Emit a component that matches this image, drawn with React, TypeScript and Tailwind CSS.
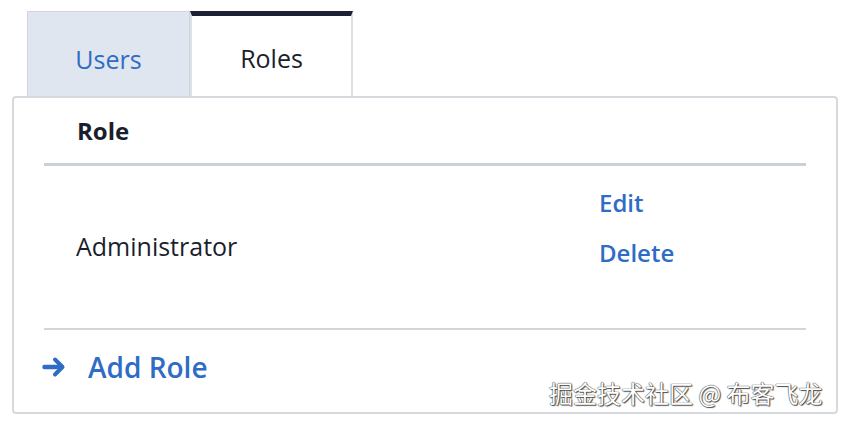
const font = { fontFamily: '"Open Sans", "Noto Sans", sans-serif' };

function Arrow() {
  return (
    <svg width="24" height="22" viewBox="0 0 24 22" fill="none" aria-hidden>
      <path d="M2.5 11h16" stroke="currentColor" strokeWidth="4.5" strokeLinecap="round" />
      <path
        d="M13 3.5l7.5 7.5-7.5 7.5"
        stroke="currentColor"
        strokeWidth="4"
        strokeLinecap="round"
        strokeLinejoin="round"
      />
    </svg>
  );
}

export default function App() {
  return (
    <div
      className="relative h-[422px] w-[850px] overflow-hidden bg-white pl-[12px] pt-[11px] text-[#1b1e2c]"
      style={font}
    >
      {/* tabs */}
      <div className="ml-[15px] flex">
        <div className="flex h-[85px] w-[163px] items-center justify-center border border-b-0 border-[#cfd5dd] bg-[#dfe6ef] pt-[11px] text-[25px] font-medium text-[#2f6cc6]">
          Users
        </div>
        <div className="flex h-[85px] w-[163px] items-center justify-center border-x-2 border-t-[5px] border-x-[#dde1e6] border-t-[#1c2035] bg-white pt-[6px] text-[25px]">
          Roles
        </div>
      </div>

      {/* panel */}
      <div className="flex h-[318px] w-[826px] flex-col rounded-[4px] border-2 border-[#d6dade] px-[30px]">
        <div className="flex h-[65px] items-center pl-[33px] text-[24px] font-bold">Role</div>
        <div className="h-[3px] bg-[#c8d0da]" />
        <div className="flex h-[162px] items-center pl-[32px]">
          <div className="w-[523px] text-[25px]">Administrator</div>
          <div className="flex flex-col gap-[18px] pb-[38px] text-[24px] font-semibold leading-[32px] text-[#2f6cc6]">
            <span>Edit</span>
            <span>Delete</span>
          </div>
        </div>
        <div className="h-[2px] bg-[#d2d6db]" />
        <div className="flex h-[80px] items-center gap-[22px] pb-[6px] text-[28px] font-semibold text-[#2f6cc6]">
          <span className="-ml-[2px] flex">
            <Arrow />
          </span>
          <span>Add Role</span>
        </div>
      </div>

      {/* watermark */}
      <div
        className="absolute left-[549px] top-[375px] text-[24px] text-white [text-shadow:0_0_1px_#333,0_0_1px_#333,1px_1px_1px_#555]"
        style={{ fontFamily: '"Noto Sans CJK SC", sans-serif' }}
      >
        掘金技术社区 @ 布客飞龙
      </div>
    </div>
  );
}
